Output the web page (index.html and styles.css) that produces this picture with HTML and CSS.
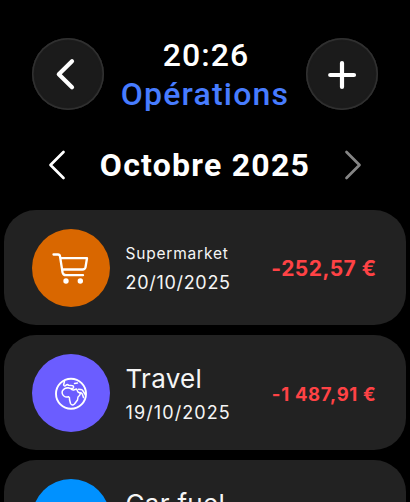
FILE: index.html
```html
<!DOCTYPE html>
<html lang="fr">
<head>
<meta charset="utf-8">
<title>Opérations</title>
<link rel="stylesheet" href="styles.css">
</head>
<body>
<header class="header">
  <button class="round" aria-label="Retour"><svg width="72" height="72" viewBox="0 0 72 72"><path class="line thick" d="M40 23.300L26.800 36.300L40 49.300"/></svg></button>
  <div class="heading"><div class="time">20:26</div><div class="title">Opérations</div></div>
  <button class="round" aria-label="Ajouter"><svg width="72" height="72" viewBox="0 0 72 72"><path class="line plus" d="M24.200 37H48M36 25V49"/></svg></button>
</header>
<nav class="month">
  <svg width="18" height="30" viewBox="0 0 18 30"><path class="line thin" d="M15.500 2L2.500 15L15.500 28"/></svg>
  <h1 class="month-name">Octobre 2025</h1>
  <svg class="dim" width="18" height="30" viewBox="0 0 18 30"><path class="line thin" d="M2.500 2L15.500 15L2.500 28"/></svg>
</nav>
<main class="list">
  <article class="row">
    <div class="icon orange"><svg width="78" height="78" viewBox="0 0 78 78"><path class="line cart" d="M21.500 25.500H26Q27.700 25.500 28 27.200L30.500 43.200Q31.200 46.200 34 46.200H51M28.700 29.200H55L53.500 38.300Q53 40.500 50.500 40.500H30.500"/><circle class="wheel" cx="34" cy="52" r="2.700"/><circle class="wheel" cx="48.300" cy="52" r="2.700"/></svg></div>
    <div class="info"><div class="name small">Supermarket</div><div class="date">20/10/2025</div></div>
    <div class="amount">-252,57 €</div>
  </article>
  <article class="row">
    <div class="icon violet"><svg width="78" height="78" viewBox="0 0 78 78"><circle class="line globe" cx="39" cy="39.800" r="15"/><path class="line land" transform="translate(0 -.5)" d="M32.500 27.500L31.600 31.500Q32.500 33.500 34 31.700Q35.500 30.500 36.500 31.700L39.500 32Q42 32 41.500 34Q41 35.500 38.500 35M38.500 35L36 34.200Q32 34.500 30.300 37.500Q29.500 41 32.500 43Q34 44 36.500 43.200Q38 44 37.500 46L38.500 50Q40 52.700 42.500 50.500L45.500 46.500L46 43.500Q49 41 48 39.500L46 38.500L44.500 35.500L41.500 36.500Q40 36.700 38.500 35M42.500 30L45.500 29.500M46.500 35.800L48.500 36Q50 35.500 51 37.500L53.500 41.500M48.800 39L50.300 40.500L51.500 44"/></svg></div>
    <div class="info"><div class="name large">Travel</div><div class="date alt">19/10/2025</div></div>
    <div class="amount long">-1 487,91 €</div>
  </article>
  <article class="row">
    <div class="icon blue"></div>
    <div class="info"><div class="name large">Car fuel</div><div class="date">18/10/2025</div></div>
  </article>
</main>
</body>
</html>
```
FILE: styles.css
```css
* { box-sizing: border-box; }
html { height: 100%; overflow: hidden; background: #000; }
body {
  margin: 0;
  height: 502px;
  overflow: hidden;
  background: #000;
  color: #fff;
  font-family: Inter, Roboto, sans-serif;
}
.header { display: flex; justify-content: space-between; padding: 38px 32px 0; height: 145px; }
.round {
  width: 72px; height: 72px; padding: 0; border: 0; border-radius: 50%;
  background: #1b1b1b; box-shadow: inset 0 0 0 1.500px #303030, inset 0 0 3px #363636; color: #fff;
}
svg { display: block; flex: none; }
.line { fill: none; stroke: currentColor; stroke-linecap: round; stroke-linejoin: round; }
.thick { stroke-width: 4.200px; }
.plus { stroke-width: 4.200px; }
.thin { stroke-width: 2.700px; }
.cart { stroke-width: 2.300px; }
.globe { stroke-width: 1.900px; }
.land { stroke-width: 1.500px; }
.wheel { fill: #fff; }
.heading { text-align: center; white-space: nowrap; font-family: Roboto, sans-serif; font-size: 32px; line-height: 39px; font-weight: 500; }
.time { margin-top: -2px; padding-left: 2px; letter-spacing: 1.100px; }
.title { color: #477cff; letter-spacing: 1.200px; }
.month { display: flex; justify-content: space-between; align-items: center; height: 40px; padding: 0 48px; margin-bottom: 25px; }
.month-name { margin: 0; font: 700 32px/40px Roboto, sans-serif; letter-spacing: 1.250px; white-space: nowrap; }
.dim { color: #858585; }
.list { display: flex; flex-direction: column; gap: 10px; padding: 0 4px; }
.row { display: flex; align-items: center; flex: none; height: 115px; padding: 0 30px 0 28px; border-radius: 32px; background: #222; }
.icon { flex: none; width: 78px; height: 78px; border-radius: 50%; }
.orange { background: #d96700; }
.violet { background: #6b5dff; }
.blue { background: #0091ff; }
.info { flex: 1; margin-left: 15.500px; white-space: nowrap; color: #f5f5f5; }
.small { font-size: 15.500px; line-height: 29px; letter-spacing: 0.800px; }
.large { font-size: 26px; line-height: 40px; letter-spacing: 0.300px; padding-top: 1px; margin-bottom: -1px; }
.date { font-size: 18px; line-height: 29px; letter-spacing: 0.700px; }
.alt { letter-spacing: 1.100px; }
.amount { color: #ff4245; font-size: 21px; font-weight: 700; line-height: 29px; letter-spacing: 0.450px; padding-top: 1px; margin-right: -0.500px; white-space: nowrap; }
.long { font-size: 18.500px; letter-spacing: 0.700px; padding-top: 3px; }
```
